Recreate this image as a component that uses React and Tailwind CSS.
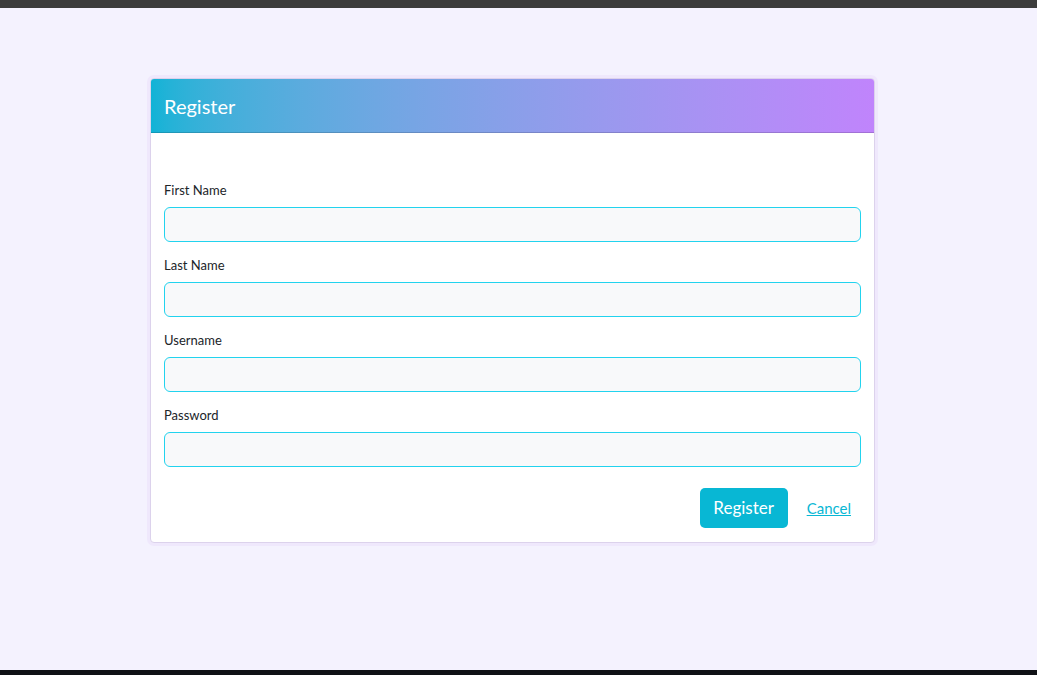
export default function App() {
  const fields = ["First Name", "Last Name", "Username", "Password"];
  return (
    <div className="min-h-[675px] flex flex-col bg-[#f4f2fe]" style={{ fontFamily: "Lato, 'Noto Sans', sans-serif" }}>
      <div className="h-[8px] bg-[#3c3c3c]" />
      <div className="flex-1 pt-[70px] pl-[150px]">
        <div className="w-[725px] bg-white border border-[#dcd2ec] rounded-[4px] shadow-[0_0_0_3px_#efe8fc] overflow-hidden">
          <div className="h-[54px] flex items-center px-[13px] bg-gradient-to-r from-[#10b3d6] to-[#c084fc] border-b border-black/15">
            <h1 className="text-[20px] text-white leading-none">Register</h1>
          </div>
          <form className="px-[13px] pt-[47px] pb-[14px]">
            {fields.map((f) => (
              <div key={f} className="mb-[13px]">
                <label className="block text-[13px] leading-[20px] text-[#212529] mb-[7px]">{f}</label>
                <input
                  type={f === "Password" ? "password" : "text"}
                  className="block w-full h-[35px] rounded-[6px] border border-[#22d3ee] bg-[#f8f9fa] outline-none"
                />
              </div>
            ))}
            <div className="flex justify-end items-center pt-[8px]">
              <button type="button" className="h-[40px] w-[88px] rounded-[5px] bg-[#08b7d4] text-white text-[17px]">Register</button>
              <a href="#" className="ml-[6px] pl-[13px] pr-[10px] text-[15px] text-[#08b7d4] underline">Cancel</a>
            </div>
          </form>
        </div>
      </div>
      <div className="h-[5px] bg-[#0f1115]" />
    </div>
  );
}
